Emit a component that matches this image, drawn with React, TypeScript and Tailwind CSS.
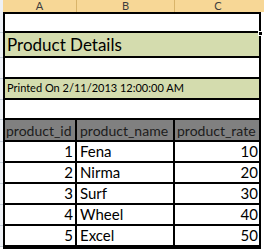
import React from 'react';

type Product = { id: number; name: string; rate: number };

const products: Product[] = [
  { id: 1, name: 'Fena', rate: 10 },
  { id: 2, name: 'Nirma', rate: 20 },
  { id: 3, name: 'Surf', rate: 30 },
  { id: 4, name: 'Wheel', rate: 40 },
  { id: 5, name: 'Excel', rate: 50 },
];

const font = { fontFamily: 'Lato, "Open Sans", sans-serif' };

function RowStub({ h }: { h: string }) {
  return <div className={`w-[3px] shrink-0 border-b border-[#c6cfdb] bg-[#eef1f6] ${h}`} />;
}

export default function App() {
  return (
    <div
      className="relative h-[249px] w-[264px] overflow-hidden bg-white text-black"
      style={font}
    >
      {/* column headers */}
      <div className="flex h-[12px] bg-[#f7d796] text-[11px] leading-[11px] text-[#3d3d3d]">
        <div className="w-[3px] shrink-0 bg-[#eef1f6]" />
        <div className="flex w-[74px] items-start justify-center border-r border-[#d9b46a]">A</div>
        <div className="flex w-[98px] items-start justify-center border-r border-[#d9b46a]">B</div>
        <div className="flex w-[86px] items-start justify-center">C</div>
        <div className="flex-1" />
      </div>

      <div className="flex">
        {/* row header sliver */}
        <div className="flex w-[3px] flex-col">
          <RowStub h="h-[21px]" />
          <RowStub h="h-[25px]" />
          <RowStub h="h-[21px]" />
          <RowStub h="h-[21px]" />
          <RowStub h="h-[20px]" />
          <RowStub h="h-[22px]" />
          {products.map((p) => (
            <RowStub key={p.id} h="h-[21px]" />
          ))}
        </div>

        <div className="w-[258px] border-2 border-black">
          <div className="h-[19px] border-b-2 border-black bg-white" />
          <div className="flex h-[25px] items-center border-b-2 border-black bg-[#d4dcae] pl-[2px] text-[17px]">
            Product Details
          </div>
          <div className="h-[21px] border-b-2 border-black bg-white" />
          <div className="flex h-[21px] items-center border-b-2 border-black bg-[#d4dcae] pl-[2px] text-[11px]">
            Printed On 2/11/2013 12:00:00 AM
          </div>
          <div className="h-[20px] border-b-2 border-black bg-white" />

          <div className="flex h-[22px] border-b-2 border-black bg-[#808080] text-[14px] text-[#1c1c1c]">
            <div className="flex w-[70px] items-center overflow-hidden whitespace-nowrap pl-[1px]">product_id</div>
            <div className="flex w-[98px] items-center overflow-hidden whitespace-nowrap border-l-2 border-black pl-[3px]">product_name</div>
            <div className="flex flex-1 items-center overflow-hidden whitespace-nowrap border-l-2 border-black pl-[2px]">product_rate</div>
          </div>

          {products.map((p) => (
            <div key={p.id} className="flex h-[21px] border-b-2 border-black text-[15px]">
              <div className="flex w-[70px] items-center justify-end pr-[2px]">{p.id}</div>
              <div className="flex w-[98px] items-center border-l-2 border-black pl-[3px]">{p.name}</div>
              <div className="flex flex-1 items-center justify-end border-l-2 border-black pr-[1px]">{p.rate}</div>
            </div>
          ))}
        </div>
      </div>

      {/* fill handle on the active cell */}
      <div className="absolute left-[258px] top-[31px] h-[5px] w-[5px] border border-white bg-black" />
    </div>
  );
}
